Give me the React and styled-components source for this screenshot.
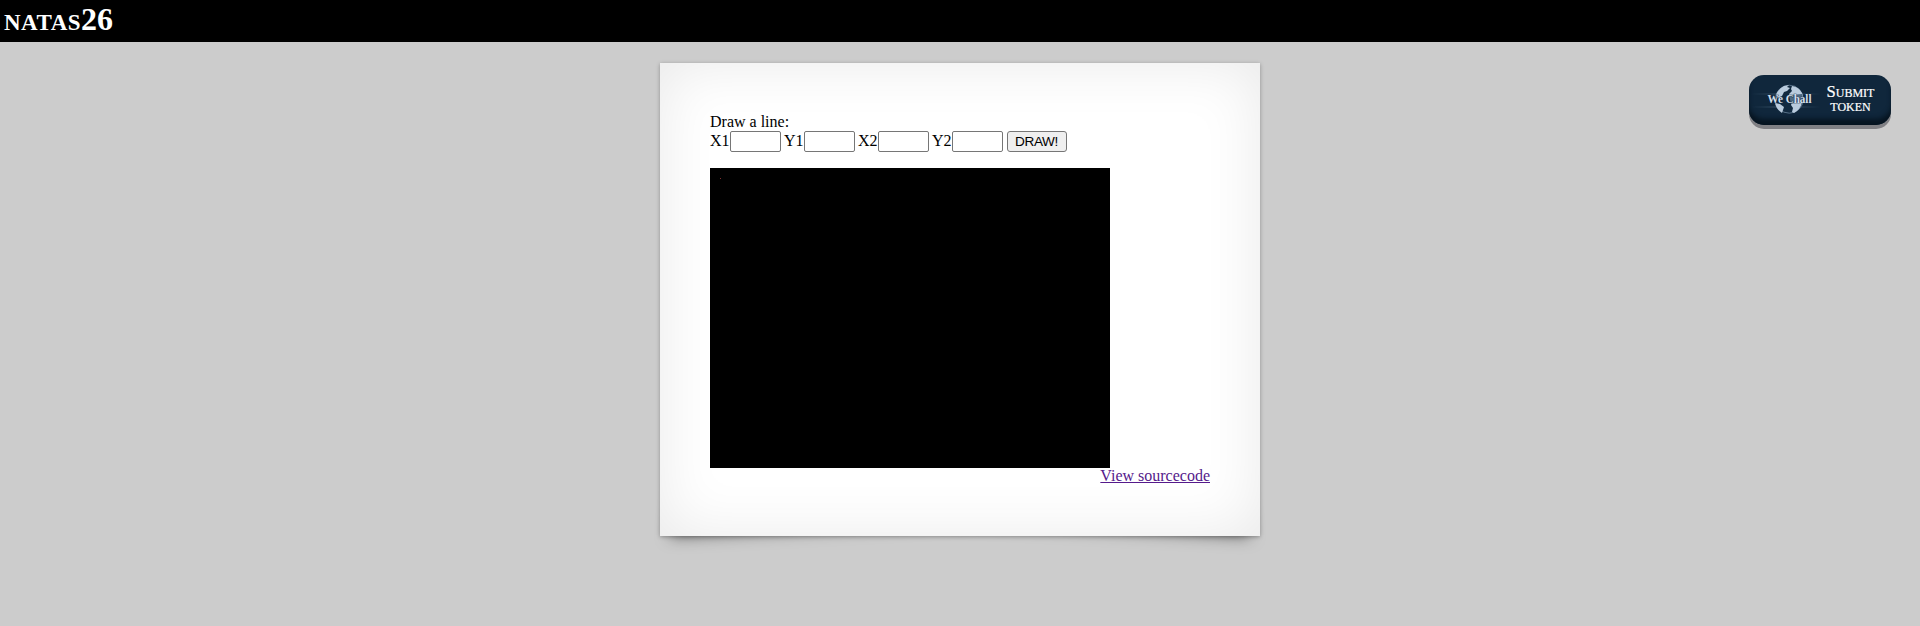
import React from "react";
import styled, { createGlobalStyle } from "styled-components";

const GlobalStyle = createGlobalStyle`
  body {
    margin: 0;
    min-height: 626px;
    background: #ccc;
    color: #000;
    font: 16px/18px "Liberation Serif", "Times New Roman", serif;
    overflow: hidden;
  }
  * { box-sizing: border-box; }
`;

const Header = styled.h1`
  height: 42px;
  margin: 0;
  padding: 0 0 0 4px;
  background: #000;
  color: #fff;
  font-size: 32px;
  line-height: 37px;
  font-variant: small-caps;
`;

const HeaderName = styled.span`
  font-size: 33.5px;
  letter-spacing: 0.5px;
`;

const Page = styled.main`
  position: relative;
  display: flex;
  justify-content: center;
  padding-top: 21px;
`;

const Card = styled.section`
  position: relative;
  z-index: 0;
  width: 600px;
  height: 473px;
  padding: 50px;
`;

const Paper = styled.div`
  position: absolute;
  inset: 0;
  z-index: -1;
  background: #fff;
  box-shadow: 0 1px 4px rgba(0, 0, 0, 0.3), inset 0 0 60px rgba(0, 0, 0, 0.09);
`;

const CornerShadow = styled.div`
  position: absolute;
  z-index: -2;
  bottom: 10px;
  ${({ $side }) => $side}: 12px;
  width: 300px;
  height: 95px;
  box-shadow: 0 11px 15px rgba(0, 0, 0, 0.5);
  transform: skew(${({ $side }) => ($side === "left" ? "-8deg, -3deg" : "8deg, 3deg")});
  transform-origin: ${({ $side }) => $side} bottom;
`;

const Form = styled.form`
  display: flex;
  align-items: center;
  height: 21px;
`;

const Field = styled.label`
  display: flex;
  width: 74px;
`;

const FieldName = styled.span`
  width: 20px;
  padding-top: 1px;
  white-space: nowrap;
`;

const CoordInput = styled.input`
  width: 51px;
  height: 21px;
  margin: 0;
  padding: 1px 2px;
  border: 1px solid #767676;
  border-radius: 2px;
  background: #fff;
`;

const DrawButton = styled.button`
  width: 60px;
  height: 21px;
  margin-left: 1px;
  padding: 0 1px 1px 0;
  border: 1px solid #767676;
  border-radius: 3px;
  background: #efefef;
  color: #000;
  font: 13.6px/17px "Liberation Sans", Arial, sans-serif;
  letter-spacing: -0.4px;
`;

const Canvas = styled.svg`
  display: block;
  width: 400px;
  height: 300px;
  margin-top: 16px;
  background: #000;
`;

const SourceRow = styled.div`
  text-align: right;
  line-height: 16px;
`;

const SourceLink = styled.a`
  color: #551a8b;
  text-decoration: underline;
`;

const TokenButton = styled.a`
  position: absolute;
  top: 33px;
  right: 29px;
  display: flex;
  align-items: center;
  width: 142px;
  height: 50px;
  border-radius: 15px;
  background: #10273c;
  box-shadow: 0 4px 0 #808084, inset 0 -7px 5px -1px #061420;
  color: #fff;
  text-decoration: none;
`;

const Logo = styled.svg`
  flex: none;
  width: 72px;
  height: 50px;
`;

const TokenLabel = styled.span`
  width: 60px;
  padding: 0 1px 3px 0;
  font-size: 16.6px;
  line-height: 14px;
  -webkit-text-stroke: 0.2px #fff;
  font-variant: small-caps;
  text-align: center;
`;

function WeChallLogo() {
  return (
    <Logo viewBox="0 0 72 50">
      <defs>
        <linearGradient id="beam">
          <stop offset="0" stopColor="#55738b" stopOpacity="0" />
          <stop offset=".5" stopColor="#6d8ba2" stopOpacity=".65" />
          <stop offset="1" stopColor="#55738b" stopOpacity="0" />
        </linearGradient>
      </defs>
      <rect x="2" y="18.5" width="70" height="1" fill="url(#beam)" />
      <rect x="2" y="31.5" width="70" height="1" fill="url(#beam)" />
      <circle cx="40.3" cy="24.2" r="14" fill="#122a40" stroke="#738da5" strokeWidth=".7" />
      <path d="M27 20q2-6 8-9l5-1-2 2 3 1-3 3-3 1-2 4-4 2zM43 11q7 1 10 7l1 5-5-1-8 1-1-4 3-3-1-2zM26 28l5 1 4 3-1 3-1 3q-6-4-7-10zM43 27l10 1q-2 7-8 10l-2-1 1-4-2-3z" fill="#b9cbdd" />
      <path d="M40 20l13-1 1 7-12 3z" fill="#4e6a83" />
      <text x="18.5" y="28.3" textLength="44" lengthAdjust="spacingAndGlyphs" fill="#d2dfeb" stroke="#172d42" strokeWidth=".7" paintOrder="stroke" fontFamily="Liberation Serif, serif" fontWeight="bold" fontSize="11.5">We Chall</text>
    </Logo>
  );
}

export default function App() {
  return (
    <>
      <GlobalStyle />
      <Header><HeaderName>natas</HeaderName>26</Header>
      <Page>
        <Card>
          <CornerShadow $side="left" />
          <CornerShadow $side="right" />
          <Paper />
          <div>Draw a line:</div>
          <Form>
            {["X1", "Y1", "X2", "Y2"].map((name) => (
              <Field key={name}><FieldName>{name}</FieldName><CoordInput name={name} /></Field>
            ))}
            <DrawButton type="button">DRAW!</DrawButton>
          </Form>
          <Canvas viewBox="0 0 400 300"><path d="M10 10h1v1h-1z" fill="#803030" /></Canvas>
          <SourceRow><SourceLink href="#source">View sourcecode</SourceLink></SourceRow>
        </Card>
        <TokenButton href="#token">
          <WeChallLogo />
          <TokenLabel>Submit token</TokenLabel>
        </TokenButton>
      </Page>
    </>
  );
}
